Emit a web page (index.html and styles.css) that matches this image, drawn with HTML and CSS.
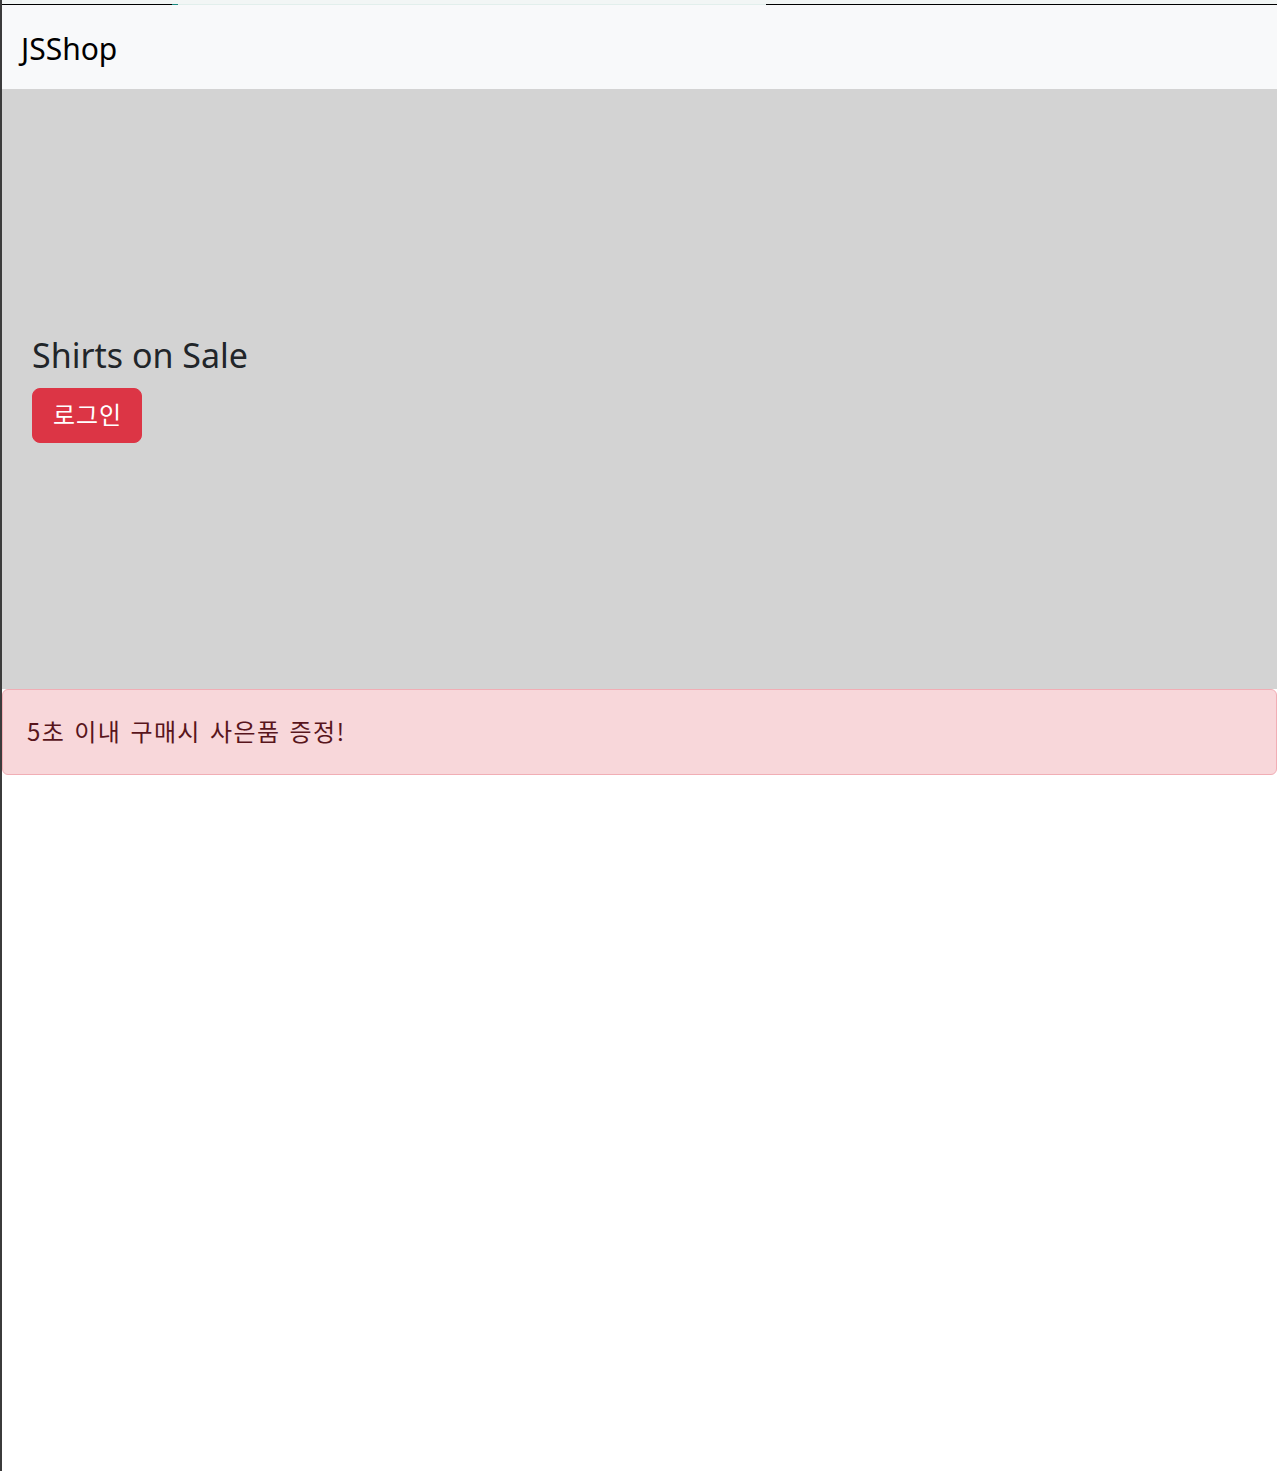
FILE: index.html
```html
<!DOCTYPE html>
<html lang="ko">
<head>
<meta charset="utf-8">
<title>JSShop</title>
<link rel="stylesheet" href="styles.css">
</head>
<body>
<div class="frame">
  <div class="topstrip"></div>
  <div class="topline">
    <span class="seg seg-dark seg-a"></span>
    <span class="seg seg-teal"></span>
    <span class="seg seg-light"></span>
    <span class="seg seg-dark seg-b"></span>
  </div>
  <nav class="navbar">
    <span class="brand">JSShop</span>
  </nav>
  <section class="hero">
    <h4 class="hero-title">Shirts on Sale</h4>
    <div><button class="btn-danger" type="button">로그인</button></div>
  </section>
  <div class="alert">5초 이내 구매시 사은품 증정!</div>
</div>
</body>
</html>
```
FILE: styles.css
```css
html, body {
  margin: 0;
  padding: 0;
  background: #ffffff;
}
* { box-sizing: border-box; }
body {
  font-family: "Noto Sans", "Noto Sans CJK KR", sans-serif;
  color: #212529;
  font-size: 24px;
  line-height: 1.5;
}
.frame {
  min-height: 1471px;
  border-left: 2px solid #3b3b3b;
  background: #ffffff;
}
.topstrip {
  height: 4px;
  background: #f2f6f5;
}
.topline {
  display: flex;
  height: 1px;
}
.seg { display: block; height: 1px; }
.seg-dark { background: #000000; }
.seg-a { width: 170px; }
.seg-teal { width: 6px; background: #1a8a80; }
.seg-light { width: 588px; background: #e2efec; }
.seg-b { flex: 1; }
.navbar {
  height: 84px;
  background: #f8f9fa;
  display: flex;
  align-items: center;
  padding-left: 19px;
}
.brand {
  font-size: 30px;
  color: #000000;
  line-height: 1.5;
  padding-top: 2px;
}
.hero {
  height: 600px;
  background: #d3d3d3;
  display: flex;
  flex-direction: column;
  justify-content: center;
  padding-left: 30px;
}
.hero-title {
  margin: 0 0 12px 0;
  font-weight: 400;
  font-size: 34px;
  line-height: 1.2;
  color: #212529;
}
.btn-danger {
  font-family: "Noto Sans CJK KR", "Noto Sans", sans-serif;
  font-size: 24px;
  letter-spacing: 1px;
  line-height: 1.5;
  color: #ffffff;
  background: #dc3545;
  border: 1px solid #dc3545;
  border-radius: 8px;
  padding: 0 0 2px 1px;
  width: 110px;
  height: 55px;
  cursor: pointer;
}
.alert {
  background: #f8d7da;
  border: 1px solid #f1aeb5;
  border-radius: 6px;
  color: #58151c;
  padding: 23px 24px 25px 24px;
  font-family: "Noto Sans CJK KR", "Noto Sans", sans-serif;
  font-size: 24px;
  letter-spacing: 1.4px;
  word-spacing: 1px;
  line-height: 36px;
}
```
